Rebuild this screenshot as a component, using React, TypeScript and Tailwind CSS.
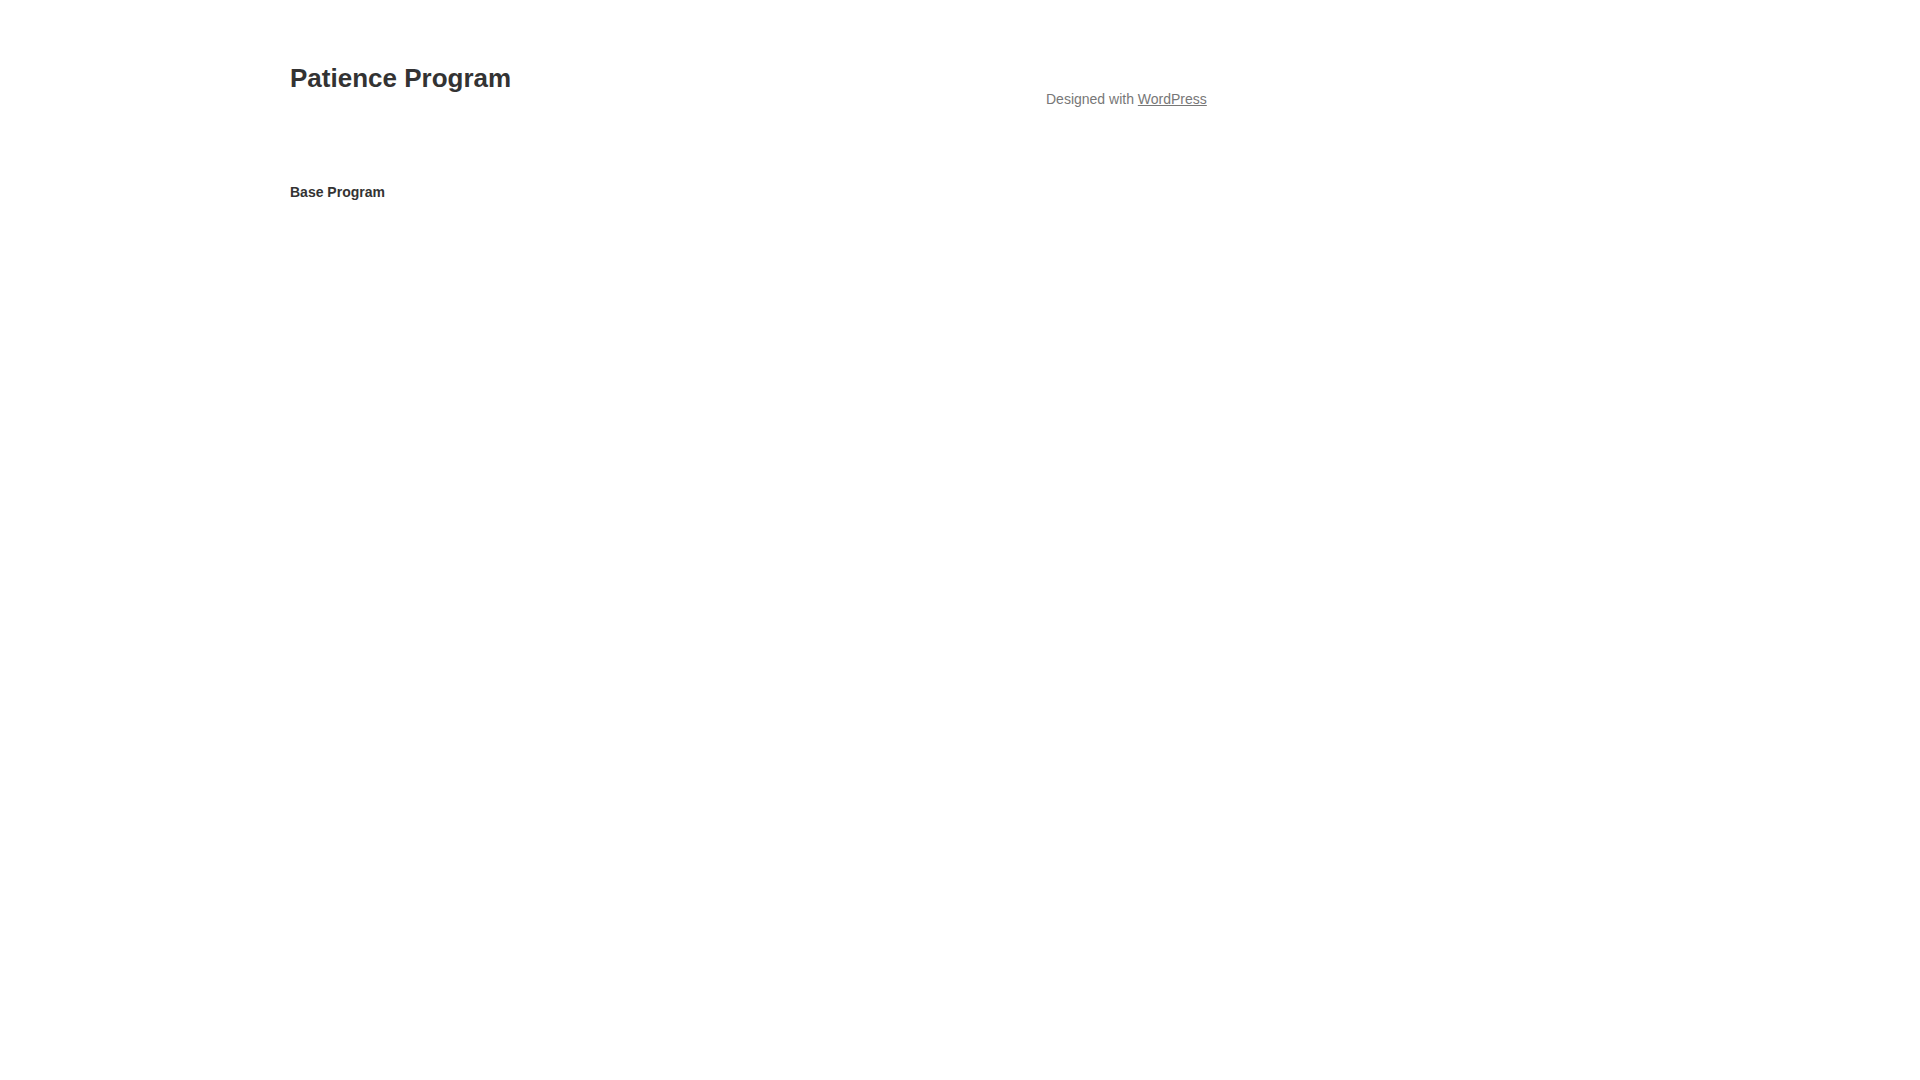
import React from 'react';

export default function App() {
  return (
    <div className="min-h-screen bg-white font-['Liberation_Sans',Arial,sans-serif]">
      <div className="pl-[290px] pt-[63px]">
        <header className="grid grid-cols-[756px_1fr] items-start">
          <h1 className="text-[26px] leading-[30px] font-bold text-[#333]">Patience Program</h1>
          <p className="mt-[26px] text-[14px] leading-[20px] text-[#777]">
            Designed with{' '}
            <a href="#" className="underline">
              WordPress
            </a>
          </p>
        </header>
        <main className="mt-[73px]">
          <h2 className="text-[14px] leading-[20px] font-bold text-[#333]">Base Program</h2>
        </main>
      </div>
    </div>
  );
}
